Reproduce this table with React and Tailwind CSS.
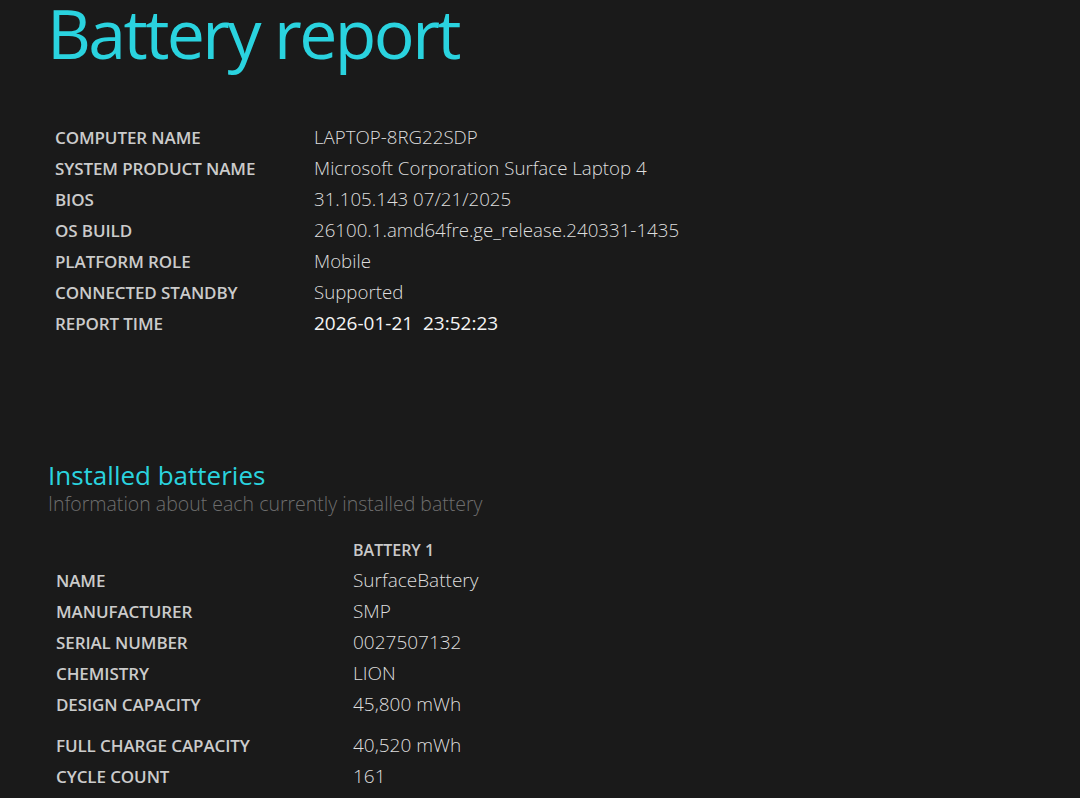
import React from 'react';

const systemRows = [
  ['COMPUTER NAME', 'LAPTOP-8RG22SDP'],
  ['SYSTEM PRODUCT NAME', 'Microsoft Corporation Surface Laptop 4'],
  ['BIOS', '31.105.143 07/21/2025'],
  ['OS BUILD', '26100.1.amd64fre.ge_release.240331-1435'],
  ['PLATFORM ROLE', 'Mobile'],
  ['CONNECTED STANDBY', 'Supported'],
  ['REPORT TIME', '2026-01-21\u00a0\u00a023:52:23'],
];

const batteryRows = [
  ['NAME', 'SurfaceBattery'],
  ['MANUFACTURER', 'SMP'],
  ['SERIAL NUMBER', '0027507132'],
  ['CHEMISTRY', 'LION'],
  ['DESIGN CAPACITY', '45,800 mWh'],
];

const batteryRows2 = [
  ['FULL CHARGE CAPACITY', '40,520 mWh'],
  ['CYCLE COUNT', '161'],
];

const Row = ({ label, value, labelW, valueSize, bright }) => (
  <div className="flex items-center h-[31px]">
    <div className={`${labelW} shrink-0 text-[17px] font-semibold text-[#cbcbcb] tracking-[-0.1px]`}>{label}</div>
    <div className={`${valueSize} ${bright ? 'text-[#f4f4f4] font-normal' : 'text-[#dedede] font-light'}`}>{value}</div>
  </div>
);

export default function App() {
  return (
    <div
      className="w-[1080px] h-[798px] overflow-hidden bg-[#1a1a1a]"
      style={{ fontFamily: '"Open Sans", "Noto Sans", sans-serif' }}
    >
      <div className="pt-[1px]">
        <h1 className="pl-[47px] -mt-[2px] text-[68px] leading-[68px] text-[#2ad3df] font-normal tracking-[-2.6px] pb-[9px]">
          Battery report
        </h1>
      </div>

      <div className="pl-[55px] mt-[46px]">
        {systemRows.map(([l, v], i) => (
          <Row
            key={l}
            label={l}
            value={v}
            labelW="w-[259px]"
            valueSize={i === systemRows.length - 1 ? 'text-[19px]' : 'text-[18.7px]'}
            bright={i === systemRows.length - 1}
          />
        ))}
      </div>

      <div className="pl-[48px] mt-[120px]">
        <h2 className="text-[26px] leading-[32px] text-[#2ad3df] font-normal">Installed batteries</h2>
        <p className="text-[19.5px] leading-[26px] text-[#6e6e6e] font-light">
          Information about each currently installed battery
        </p>
      </div>

      <div className="pl-[56px] mt-[18px]">
        <div className="flex items-center h-[30px]">
          <div className="w-[297px] shrink-0" />
          <div className="text-[16px] font-semibold text-[#c9c9c9]">BATTERY 1</div>
        </div>
        {batteryRows.map(([l, v]) => (
          <Row key={l} label={l} value={v} labelW="w-[297px]" valueSize="text-[19px]" />
        ))}
        <div className="h-[10px]" />
        {batteryRows2.map(([l, v]) => (
          <Row key={l} label={l} value={v} labelW="w-[297px]" valueSize="text-[19px]" />
        ))}
      </div>
    </div>
  );
}
